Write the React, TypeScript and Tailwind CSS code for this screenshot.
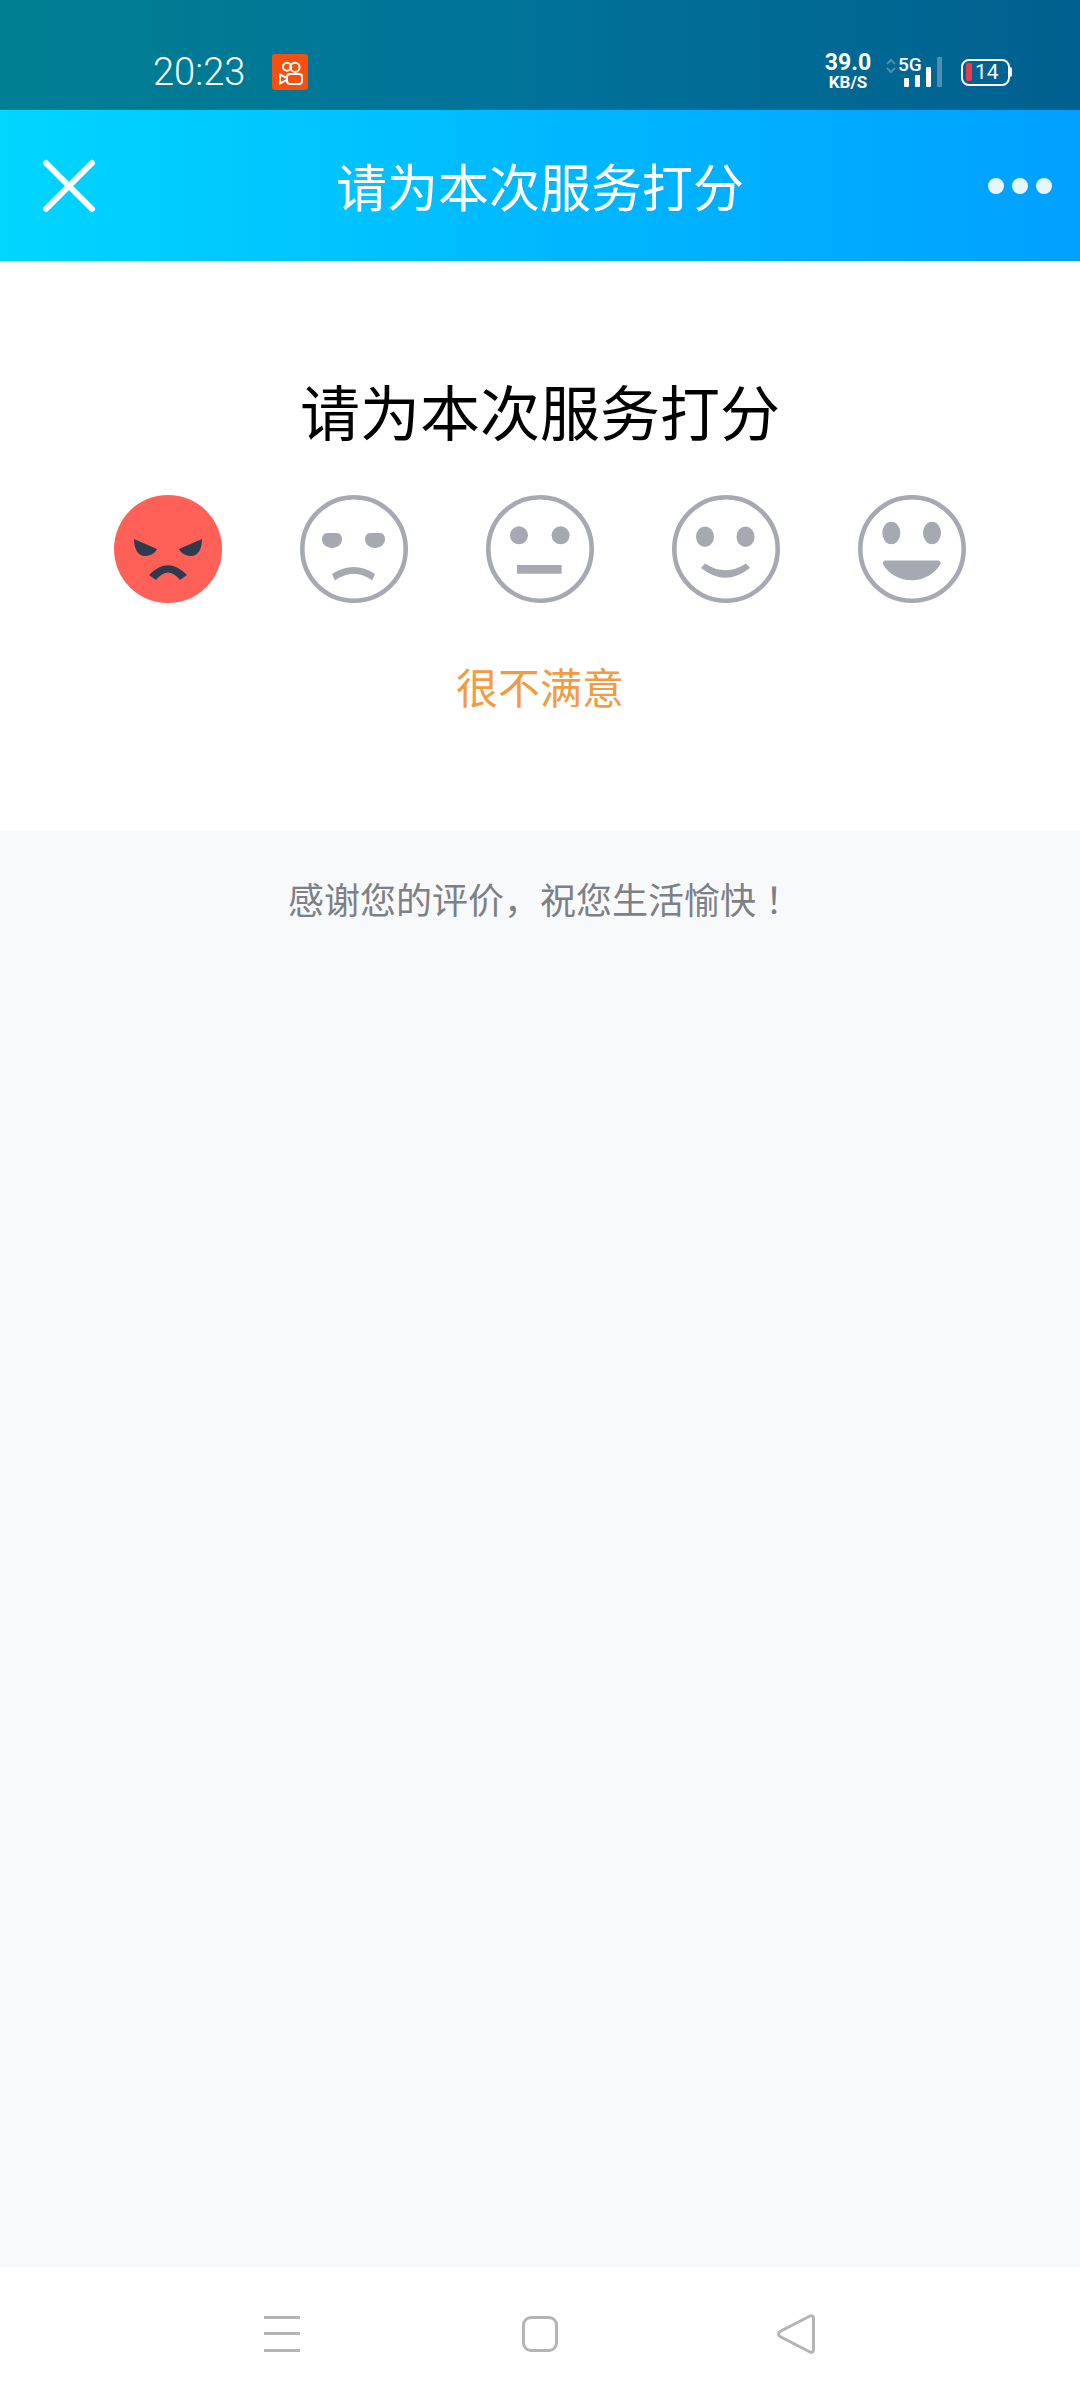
import React from "react";

const cjk = { fontFamily: '"Noto Sans CJK SC", "Noto Sans", sans-serif' };
const gray = "#a7a9b2";
const dark = "#2e3a4e";

function Ring({ children }: { children: React.ReactNode }) {
  return (
    <svg width="108" height="108" viewBox="0 0 108 108" fill={gray}>
      <circle cx="54" cy="54" r="51.7" fill="none" stroke={gray} strokeWidth="4.6" />
      {children}
    </svg>
  );
}

function Faces() {
  return (
    <div className="mt-[45px] flex justify-center gap-[78px]">
      <svg width="108" height="108" viewBox="0 0 108 108">
        <circle cx="54" cy="54" r="54" fill="#ff6159" />
        <path d="M20 44 L43 54 C40 60 34 61 31 61 C24 61 20 54 20 44Z" fill={dark} />
        <path d="M88 44 L65 54 C68 60 74 61 77 61 C84 61 88 54 88 44Z" fill={dark} />
        <path d="M35 80 Q54 60.5 73 80 L66 85 Q54 70 42 85Z" fill={dark} />
      </svg>
      <Ring>
        <path d="M27 38 H37 C40 38 42 41 42 44 C42 49.5 37.5 53 32 53 C26.5 53 22 49.5 22 44 C22 41 24 38 27 38Z" />
        <path d="M70 38 H80 C83 38 85 41 85 44 C85 49.5 80.5 53 75 53 C69.5 53 65 49.5 65 44 C65 41 67 38 70 38Z" />
        <path d="M32 79 Q54 65 75 79 L72 85.5 Q54 72 35 85.5Z" />
      </Ring>
      <Ring>
        <circle cx="33" cy="40.3" r="9" />
        <circle cx="74.6" cy="40.3" r="9" />
        <rect x="31" y="70" width="44.6" height="8.7" />
      </Ring>
      <Ring>
        <ellipse cx="33" cy="41.7" rx="9" ry="10.3" />
        <ellipse cx="73.5" cy="41.7" rx="9" ry="10.3" />
        <path d="M29 73 L33 68.5 Q53.5 82 74 68.5 L78 73 Q53.5 92.5 29 73Z" />
      </Ring>
      <Ring>
        <ellipse cx="33.3" cy="38" rx="9" ry="11.3" />
        <ellipse cx="74" cy="38" rx="9" ry="11.3" />
        <path d="M28 65.5 H79.5 C82.5 65.5 83.5 68 82 70 C76 79 66 85.3 53.7 85.3 C41.5 85.3 31 79 25.5 70 C24 68 25 65.5 28 65.5Z" />
      </Ring>
    </div>
  );
}

function StatusBar() {
  return (
    <div className="flex h-[110px] items-center bg-gradient-to-r from-[#007f92] via-[#007299] to-[#00608f] pl-[153px] pr-[68px] pt-[34px] text-white">
      <span className="w-[92px] text-[38px] font-light leading-none" style={{ fontFamily: "Roboto, sans-serif" }}>
        20:23
      </span>
      <svg className="ml-[27px]" width="36" height="36" viewBox="0 0 36 36" fill="none">
        <rect width="36" height="36" rx="3" fill="#f4500f" />
        <g stroke="#fff" strokeWidth="2">
          <circle cx="15" cy="12.7" r="4" />
          <circle cx="23" cy="13.3" r="4.6" />
          <rect x="15" y="20" width="15" height="10" rx="3" />
          <path d="M8 20.5 L15 24 V26 L8 29.5Z" />
        </g>
      </svg>
      <div className="ml-auto flex items-center" style={{ fontFamily: "Roboto, sans-serif" }}>
        <div className="flex w-[50px] flex-col items-center font-bold">
          <span className="text-[23px] leading-[20px]">39.0</span>
          <span className="text-[17px] leading-[18px]">KB/S</span>
        </div>
        <svg className="mb-[12px] ml-[13px]" width="10" height="16" viewBox="0 0 10 16" fill="none" stroke="#4d8fb3" strokeWidth="2">
          <path d="M1 6 L5 2 L9 6" />
          <path d="M1 10 L5 14 L9 10" />
        </svg>
        <div className="relative ml-[2px] h-[34px] w-[46px]">
          <svg className="absolute left-0 top-[2px]" width="46" height="32" viewBox="0 0 46 32" fill="#fff">
            <rect x="6" y="21" width="5" height="9" rx="1" />
            <rect x="17" y="18" width="5" height="12" rx="1" />
            <rect x="28" y="10" width="5" height="20" rx="1" />
            <rect x="39" y="0" width="5" height="30" fill="#4d8fb3" />
          </svg>
          <span className="absolute left-0 top-0 text-[19px] font-medium leading-[20px]">5G</span>
        </div>
        <div className="ml-[17px] flex items-center">
          <div className="flex h-[27px] w-[49px] items-center rounded-[8px] border-[2px] border-white pl-[3px]">
            <div className="h-[18px] w-[6px] rounded-[2px] bg-[#ee3b4a]" />
            <span className="ml-[3px] text-[21px] leading-none">14</span>
          </div>
          <div className="h-[10px] w-[2px] rounded-r bg-white" />
        </div>
      </div>
    </div>
  );
}

function Header() {
  return (
    <div className="flex h-[151px] items-center justify-between bg-gradient-to-r from-[#00d6ff] via-[#00b8ff] to-[#00a0ff] pl-[42px] pr-[28px] text-white">
      <svg width="54" height="54" viewBox="0 0 54 54" stroke="#fff" strokeWidth="6" strokeLinecap="round">
        <path d="M4 4 L50 50" />
        <path d="M50 4 L4 50" />
      </svg>
      <span className="mr-[4px] text-[51px] font-normal leading-none" style={cjk}>
        请为本次服务打分
      </span>
      <div className="flex gap-[8px]">
        <div className="h-[16px] w-[16px] rounded-full bg-[#e6f6ff]" />
        <div className="h-[16px] w-[16px] rounded-full bg-[#e6f6ff]" />
        <div className="h-[16px] w-[16px] rounded-full bg-[#e6f6ff]" />
      </div>
    </div>
  );
}

function NavBar() {
  return (
    <div className="flex h-[133px] items-center bg-white">
      <div className="ml-[264px] flex h-[36px] w-[36px] flex-col justify-between">
        <div className="h-[3px] bg-[#b4b4b4]" />
        <div className="h-[3px] bg-[#b4b4b4]" />
        <div className="h-[3px] bg-[#b4b4b4]" />
      </div>
      <div className="ml-[222px] h-[36px] w-[36px] rounded-[9px] border-[3px] border-[#b4b4b4]" />
      <svg className="ml-[219px]" width="38" height="40" viewBox="0 0 38 40" fill="none" stroke="#b4b4b4" strokeWidth="3" strokeLinejoin="round">
        <path d="M33 2 C35 1.2 36.5 2.2 36.5 4.5 V35.5 C36.5 37.8 35 38.8 33 38 L3 22.5 C1 21 1 19 3 17.5Z" />
      </svg>
    </div>
  );
}

export default function App() {
  return (
    <div className="flex h-[2400px] w-[1080px] flex-col bg-[#f8f9fb]" style={cjk}>
      <StatusBar />
      <Header />
      <div className="flex h-[570px] flex-col bg-white pt-[109px]">
        <h1 className="text-center text-[60px] font-normal leading-[80px] text-black">请为本次服务打分</h1>
        <Faces />
        <p className="mt-[53px] text-center text-[42px] leading-[60px] text-[#f29b42]">很不满意</p>
      </div>
      <p className="mt-[42px] flex-1 text-center text-[36px] leading-[50px] text-[#7d8086]">
        感谢您的评价，祝您生活愉快
        <span style={{ fontFamily: '"Noto Sans CJK TC", sans-serif' }}>！</span>
      </p>
      <NavBar />
    </div>
  );
}
